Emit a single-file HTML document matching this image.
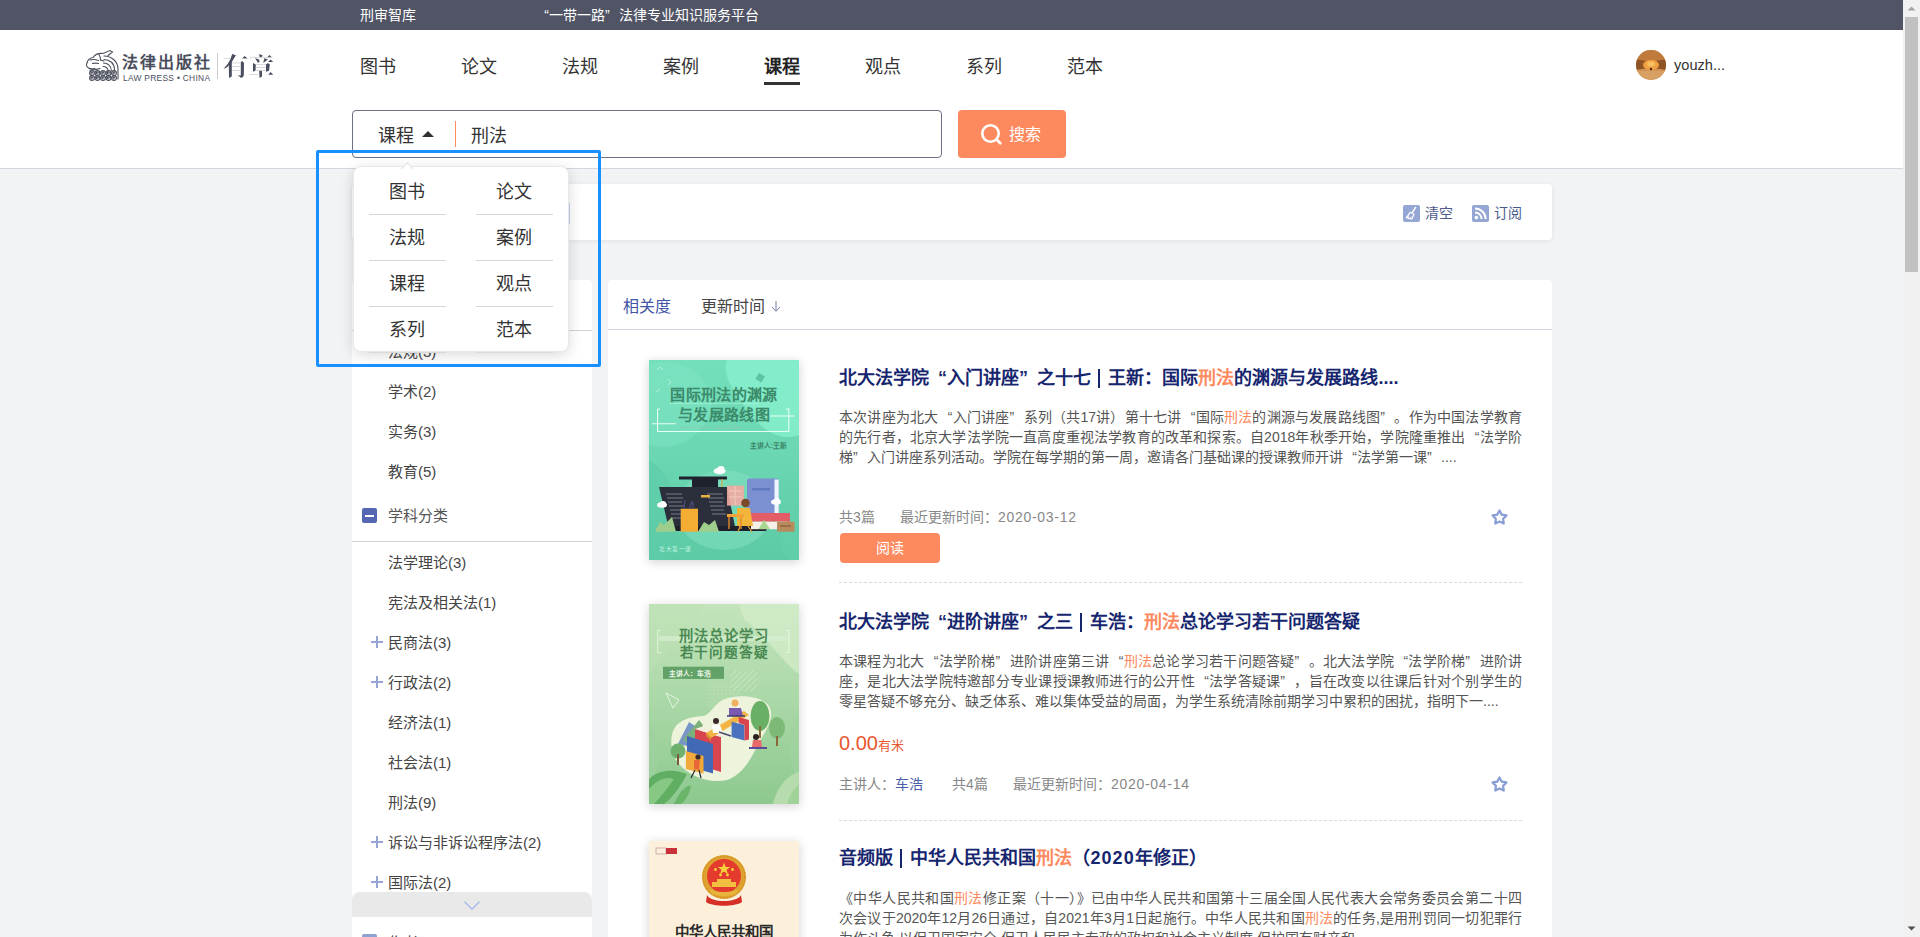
<!DOCTYPE html>
<html lang="zh-CN">
<head>
<meta charset="utf-8">
<title>有章 - 课程搜索</title>
<style>
*{margin:0;padding:0;box-sizing:border-box}
html,body{width:1920px;height:937px;overflow:hidden}
body{font-family:"Liberation Sans",sans-serif;background:#f2f3f5;position:relative;color:#333}
.abs{position:absolute}
.t{position:absolute;white-space:nowrap}
/* top bar */
#topbar{left:0;top:0;width:1903px;height:30px;background:#505465}
#topbar span{position:absolute;top:0;line-height:30px;font-size:14px;color:#fff}
/* header */
#header{left:0;top:30px;width:1903px;height:139px;background:#fff;border-bottom:1px solid #d3d7e0}
.nav{position:absolute;top:54px;font-size:18px;line-height:26px;color:#333;white-space:nowrap}
.nav.on{font-weight:bold;color:#222}
#scroll{left:1903px;top:0;width:17px;height:937px;background:#f1f1f1}
/* search */
#sbox{left:352px;top:110px;width:590px;height:48px;border:1px solid #6c7186;border-radius:4px;background:#fff}
#sbtn{left:958px;top:110px;width:108px;height:48px;border-radius:4px;background:#fd895e}
/* panels */
.panel{position:absolute;background:#fff;border-radius:4px}

.q1{display:inline-block;width:1em;text-align:right;text-align-last:right}
.q2{display:inline-block;width:1em;text-align:left;text-align-last:left}
.hl{color:#fd895e}
.side{position:absolute;left:388px;font-size:15px;line-height:20px;color:#444;white-space:nowrap}
.plus{position:absolute;left:371px;width:12px;height:12px}
.plus:before,.plus:after{content:"";position:absolute;background:#96a5d4}
.plus:before{left:0;top:4.8px;width:12px;height:2.4px}
.plus:after{left:4.8px;top:0;width:2.4px;height:12px}
.minus{position:absolute;left:362px;width:15px;height:15px;border-radius:2px;background:#5566b3}
.minus:after{content:"";position:absolute;left:3px;top:6.5px;width:9px;height:2px;background:#fff}
.title{position:absolute;left:839px;font-size:18px;line-height:26px;font-weight:bold;color:#15256e;white-space:nowrap}
.desc{position:absolute;left:839px;width:683px;font-size:14px;line-height:20px;color:#555;white-space:nowrap}
.desc.j{text-align:justify;text-align-last:justify}
.meta{position:absolute;font-size:14px;line-height:20px;color:#888;white-space:nowrap}
.dash{position:absolute;left:839px;width:683px;height:0;border-top:1px dashed #d9dbe2}
.cover{position:absolute;left:649px;width:150px;height:200px;box-shadow:0 2px 10px rgba(0,0,0,.18);overflow:hidden}
.star{position:absolute;left:1490.5px;width:17px;height:17px;overflow:visible}
.sep{display:inline-block;width:2.4px;height:19px;background:#15256e;margin:0 8px 0 7px;vertical-align:-4px}
.dd{position:absolute;font-size:18px;line-height:26px;color:#333;white-space:nowrap}
.ddl{position:absolute;height:1px;background:#d6d6d6;width:77px}
</style>
</head>
<body>
<div id="topbar" class="abs">
  <span style="left:360px">刑审智库</span>
  <span style="left:535px"><i class="q1" style="font-style:normal">“</i>一带一路<i class="q2" style="font-style:normal">”</i>法律专业知识服务平台</span>
</div>
<div id="header" class="abs"></div>
<!-- logo -->
<svg class="abs" style="left:85px;top:48px" width="35" height="34" viewBox="0 0 35 34">
<g fill="none" stroke="#4a4e5c" stroke-width="1.1" stroke-linecap="round">
<path d="M19 8C26 8 33 13 33 21V31"/>
<path d="M19 11.5C25 11.5 29.5 15.5 29.5 21.5V22.5"/>
<path d="M18.5 15C23 15 26.3 18 26.3 22.5"/>
<path d="M18 18.5C21 18.5 23 20.5 23 22.5"/>
<path d="M2 15C2.5 12 5 10 8 9.5C10 6.5 14 5 18 5.5L25 2.5L27.5 4L23 7.5"/>
<path d="M14 6.5C15 8 15.5 10 15.5 12L19 13"/>
<path d="M5 12C8 11 11 11.5 13.5 12.5M7.5 15.5C9.5 15 11.5 15 13.5 15.5"/>
<path d="M2 15C1 16.5 1.5 19 3.5 20C5 21 8 21 10 20.5"/>
<path d="M5 22C8 22 12 21.5 15 20.5"/>
<circle cx="7" cy="25" r="2.4"/><circle cx="12.5" cy="25" r="2.4"/><circle cx="18" cy="25" r="2.4"/><circle cx="23.5" cy="25" r="2.4"/><circle cx="29" cy="25" r="2.4"/>
<circle cx="7" cy="30" r="2.4"/><circle cx="12.5" cy="30" r="2.4"/><circle cx="18" cy="30" r="2.4"/><circle cx="23.5" cy="30" r="2.4"/><circle cx="29" cy="30" r="2.4"/><path d="M6.8 25.9A1 1 0 1 1 7.9 24.9"/><path d="M12.3 25.9A1 1 0 1 1 13.4 24.9"/><path d="M17.8 25.9A1 1 0 1 1 18.9 24.9"/><path d="M23.3 25.9A1 1 0 1 1 24.4 24.9"/><path d="M28.8 25.9A1 1 0 1 1 29.9 24.9"/><path d="M6.8 30.9A1 1 0 1 1 7.9 29.9"/><path d="M12.3 30.9A1 1 0 1 1 13.4 29.9"/><path d="M17.8 30.9A1 1 0 1 1 18.9 29.9"/><path d="M23.3 30.9A1 1 0 1 1 24.4 29.9"/><path d="M28.8 30.9A1 1 0 1 1 29.9 29.9"/>
</g></svg>
<div class="t" style="left:122px;top:52px;font-size:16px;line-height:22px;font-weight:bold;color:#4a4e5c;letter-spacing:2px">法律出版社</div>
<div class="t" style="left:123px;top:74px;font-size:8.4px;line-height:9px;color:#4a4e5c;letter-spacing:0.3px">LAW PRESS • CHINA</div>
<div class="abs" style="left:217px;top:53px;width:1px;height:26px;background:#c8cad2"></div>
<svg class="abs" style="left:218px;top:48px" width="60" height="36" viewBox="0 0 60 36">
<g fill="#4a4e5e">
<path d="M14.2 6L17.9 7.2L13.5 14.5L9 19.2L5.4 21L10 15.5L12.6 10.8Z"/>
<path d="M10.8 15L13.8 13.8V28.6L11 30Z"/>
<path d="M22.8 14L24.3 13L26 15L25.8 27C25.6 28.5 24.8 29.6 22.6 29.8L21 28L19 27.2L22.8 27.4Z"/>
<path d="M24.2 10.6L26.6 8L29.6 10.6Z"/>
<path d="M41.2 6L44.8 7.4L43.6 9.2L41.6 9.2Z"/>
<path d="M37 10L41 11.6L41.6 13.4L40 15L38.6 12.6Z"/>
<path d="M46.4 10.2L50 11.4L45.2 15Z"/>
<path d="M49 9.6L51.4 7L54 9.6Z"/>
<path d="M50 14L52.6 11.6L55.2 14Z"/>
<path d="M35 15L37.8 16.4L37.6 22.4L35 23.8Z"/>
<path d="M48 16.5L49.8 15L51.8 16.6L51 22.8L48 23.8Z"/>
<path d="M41.2 22.4H44V28.6L41.5 30Z"/>
<path d="M50.2 26.8L52.6 24L55.2 26.8Z"/>
</g>
<g stroke="#cfd1d8" stroke-width=".8">
<path d="M5.5 10.4H12.6M14 14.9H22.5M14 18.5H22.5M14 22.5H22.5"/>
<path d="M31.5 9.4H54M37.6 16.5H48M37.6 19.5H48M37.6 22.5H48M31.2 26.5H40"/>
</g>
</svg>
<div class="nav" style="left:360px">图书</div>
<div class="nav" style="left:461px">论文</div>
<div class="nav" style="left:562px">法规</div>
<div class="nav" style="left:663px">案例</div>
<div class="nav on" style="left:764px">课程</div>
<div class="nav" style="left:865px">观点</div>
<div class="nav" style="left:966px">系列</div>
<div class="nav" style="left:1067px">范本</div>
<div class="abs" style="left:764px;top:82px;width:36px;height:3px;background:#333"></div>
<!-- user -->
<svg class="abs" style="left:1636px;top:50px" width="30" height="30" viewBox="0 0 30 30"><defs><clipPath id="av"><circle cx="15" cy="15" r="15"/></clipPath></defs><g clip-path="url(#av)"><rect width="30" height="30" fill="#d29352"/><rect width="30" height="11" fill="#c07a3c"/><path d="M0 10C6 9 10 12 15 11C20 12 24 9 30 10V20C24 19 20 18 15 18C10 18 6 19 0 20Z" fill="#8e5426"/><ellipse cx="15" cy="15" rx="8" ry="5" fill="#f0a040"/><ellipse cx="15" cy="14" rx="4" ry="2.5" fill="#f7c060"/><circle cx="15" cy="19" r="1.2" fill="#4a2a10"/><rect y="21" width="30" height="9" fill="#d9a066"/></g></svg>
<div class="t" style="left:1674px;top:55px;font-size:14.6px;line-height:20px;color:#333">youzh...</div>

<!-- search -->
<div id="sbox" class="abs"></div>
<div class="t" style="left:378px;top:123px;font-size:18px;line-height:26px;color:#333">课程</div>
<svg class="abs" style="left:422px;top:131px" width="12" height="6" viewBox="0 0 12 6"><path d="M6 0L12 6H0Z" fill="#333"/></svg>
<div class="abs" style="left:455px;top:121px;width:1px;height:26px;background:#fd895e"></div>
<div class="t" style="left:471px;top:123px;font-size:18px;line-height:26px;color:#333">刑法</div>
<div id="sbtn" class="abs"></div>
<svg class="abs" style="left:980px;top:123px" width="24" height="24" viewBox="0 0 24 24"><circle cx="10.5" cy="10.5" r="8.2" fill="none" stroke="#fff" stroke-width="2.6"/><path d="M17.6 17.6L20.3 20.3" stroke="#fff" stroke-width="2.8" stroke-linecap="round"/></svg>
<div class="t" style="left:1009px;top:123px;font-size:16px;line-height:24px;color:#fff">搜索</div>

<!-- top summary panel -->
<div class="panel" style="left:352px;top:184px;width:1200px;height:56px;box-shadow:0 1px 4px rgba(0,0,0,.08)"></div>

<!-- sidebar -->
<div class="panel" style="left:352px;top:280px;width:240px;height:700px"></div>

<!-- main -->
<div class="panel" style="left:608px;top:280px;width:944px;height:700px"></div>


<!-- summary panel content -->
<div class="abs" style="left:520px;top:202px;width:50px;height:23px;border:1px solid #c5d0ee;border-left:none;border-radius:0 2px 2px 0"></div>
<svg class="abs" style="left:1403px;top:205px" width="17" height="17" viewBox="0 0 17 17"><rect width="17" height="17" rx="2" fill="#94a6d4"/><path d="M12.5 2.5L9.6 7.2" stroke="#fff" stroke-width="1.5" stroke-linecap="round"/><path d="M7.2 7.3L11 9.2L9 13.8C7 14 4.6 13.4 3.2 12.6C4.6 11.6 5.8 9.4 7.2 7.3Z" fill="none" stroke="#fff" stroke-width="1.2" stroke-linejoin="round"/><path d="M6 11.2L5.1 13M8 11.8L7.4 13.7" stroke="#fff" stroke-width="1"/></svg>
<div class="t" style="left:1425px;top:203px;font-size:14px;line-height:20px;color:#4c5a8a">清空</div>
<svg class="abs" style="left:1472px;top:205px" width="17" height="17" viewBox="0 0 17 17"><rect width="17" height="17" rx="2" fill="#94a6d4"/><circle cx="4.4" cy="12.6" r="1.8" fill="#fff"/><path d="M3 7.4A6.6 6.6 0 0 1 9.6 14M3 3.4A10.6 10.6 0 0 1 13.6 14" fill="none" stroke="#fff" stroke-width="2"/></svg>
<div class="t" style="left:1494px;top:203px;font-size:14px;line-height:20px;color:#4c5a8a">订阅</div>

<!-- sidebar content -->
<div class="minus" style="top:297px"></div>
<div class="side" style="top:295px">资源类型</div>
<div class="abs" style="left:352px;top:330px;width:240px;height:1px;background:#d3d3d3"></div>
<div class="side" style="top:342px">法规(3)</div>
<div class="side" style="top:382px">学术(2)</div>
<div class="side" style="top:422px">实务(3)</div>
<div class="side" style="top:462px">教育(5)</div>
<div class="minus" style="top:508px"></div>
<div class="side" style="top:506px;left:388px;color:#555">学科分类</div>
<div class="abs" style="left:352px;top:541px;width:240px;height:1px;background:#d3d3d3"></div>
<div class="side" style="top:553px">法学理论(3)</div>
<div class="side" style="top:593px">宪法及相关法(1)</div>
<div class="plus" style="top:636px"></div><div class="side" style="top:633px">民商法(3)</div>
<div class="plus" style="top:676px"></div><div class="side" style="top:673px">行政法(2)</div>
<div class="side" style="top:713px">经济法(1)</div>
<div class="side" style="top:753px">社会法(1)</div>
<div class="side" style="top:793px">刑法(9)</div>
<div class="plus" style="top:836px"></div><div class="side" style="top:833px">诉讼与非诉讼程序法(2)</div>
<div class="plus" style="top:876px"></div><div class="side" style="top:873px">国际法(2)</div>
<div class="abs" style="left:352px;top:892px;width:240px;height:25px;background:#e9e9e9;border-radius:8px 8px 0 0"></div>
<svg class="abs" style="left:464px;top:901px" width="16" height="9" viewBox="0 0 16 9"><path d="M0.5 0.8L8 8L15.5 0.8" fill="none" stroke="#a9b8e8" stroke-width="1.3"/></svg>
<div class="minus" style="top:934px;background:#8fa3d2"></div>
<div class="side" style="top:933px">作者</div>

<!-- main content -->
<div class="t" style="left:623px;top:296px;font-size:16px;line-height:22px;color:#4356a6">相关度</div>
<div class="t" style="left:701px;top:296px;font-size:16px;line-height:22px;color:#444">更新时间</div>
<svg class="abs" style="left:771px;top:301px" width="10" height="11" viewBox="0 0 10 11"><path d="M5 0V10M1 6L5 10.3L9 6" fill="none" stroke="#7a7fa6" stroke-width="1"/></svg>
<div class="abs" style="left:608px;top:329px;width:944px;height:1px;background:#d3d7e0"></div>

<!-- item 1 -->
<div class="cover" style="top:360px" id="c1"><svg width="150" height="200" viewBox="0 0 150 200">
<defs><linearGradient id="g1" x1="0" y1="0" x2="0" y2="1"><stop offset="0" stop-color="#74dfbb"/><stop offset=".5" stop-color="#6ad6b2"/><stop offset="1" stop-color="#5ccaa5"/></linearGradient></defs>
<rect width="150" height="200" fill="url(#g1)"/>
<path d="M78 0H150V75C132 82 112 70 100 52C88 35 72 18 78 0Z" fill="#86efcc" opacity=".85"/>
<path d="M0 5C25 -5 55 10 62 35C68 60 40 95 0 85Z" fill="#7de4c2" opacity=".55"/>
<path d="M0 100C25 115 40 160 18 200H0Z" fill="#5ecca8" opacity=".6"/>
<path d="M150 150C130 165 125 190 140 200H150Z" fill="#62d0ab" opacity=".6"/>
<ellipse cx="75" cy="150" rx="48" ry="40" fill="#86e2c4" opacity=".5"/>
<text x="75" y="39.5" font-size="15" font-weight="bold" fill="#3b8a6a" text-anchor="middle" letter-spacing=".3">国际刑法的渊源</text>
<path d="M20 43.5H110" stroke="#a8f0d6" stroke-width=".7"/>
<text x="75" y="59.5" font-size="15" font-weight="bold" fill="#3b8a6a" text-anchor="middle" letter-spacing=".3">与发展路线图</text>
<path d="M8.6 49H11M8.6 49V71.5H139.8V49H137" fill="none" stroke="#e6fff4" stroke-width="1.1"/>
<path d="M3 63.7H27M121 56H145.5" stroke="#e6fff4" stroke-width="1.1"/>
<text x="32" y="68.5" font-size="3.2" fill="#8fc9b2" letter-spacing="1.4">国际刑法的渊源 与发展路线图</text>
<text x="138" y="88" font-size="6.8" font-weight="bold" fill="#3b8a6a" text-anchor="end">主讲人:王新</text>
<path d="M8 10L11 7L14 10M19 19L22 22L19 25M7 32L11 29" stroke="#b5f3dc" stroke-width=".9" fill="none"/>
<rect x="108" y="14" width="7" height="7" fill="#5fc4a2" transform="rotate(30 111 17)"/>
<ellipse cx="70.6" cy="111" rx="6" ry="3.2" fill="#fff"/><ellipse cx="72" cy="109" rx="3.5" ry="3" fill="#fff"/>
<rect x="30" y="116.5" width="48" height="3" fill="#1f222c"/>
<rect x="43" y="119" width="26" height="8" fill="#1f222c"/>
<path d="M73 119V131" stroke="#e8a640" stroke-width="1"/>
<path d="M10 127H78L86.5 169H20Z" fill="#2b2e3b"/>
<g stroke="#8a8f9c" stroke-width=".8"><path d="M17 134H33M18 138H34M19 142H33M20 146H35M21 150H34M22 154H36M23 158H35"/><path d="M58 134H74M59 138H75M60 142H74M61 146H76M62 150H75M63 154H77"/></g>
<rect x="52" y="135" width="9" height="2.5" fill="#e8b040"/>
<rect x="8.6" y="166" width="109" height="5" rx="1.5" fill="#1e212b"/>
<rect x="31.7" y="148.7" width="17.3" height="23" fill="#f4ac33"/>
<path d="M35 149L36 140M40 149L43 141M44 149L44 142" stroke="#4a5080" stroke-width="1.2"/>
<path d="M5.8 171.7L11 162L15 165L23 157L27 171.7Z" fill="#9fce8c"/>
<path d="M49 171.7L55 162L60 165L66 160L70 171.7Z" fill="#9fce8c"/>
<rect x="78" y="125.6" width="17" height="20" fill="#f3aaa4" opacity=".9"/>
<path d="M80 131H93M80 137H93M86 126V145" stroke="#f8cfc8" stroke-width=".8"/>
<rect x="98" y="118.4" width="31.7" height="36" rx="2" fill="#7b90d0"/>
<rect x="125.5" y="119.5" width="4.2" height="35" fill="#f0f4ff"/>
<rect x="103" y="128" width="18" height="2.5" fill="#6078c0"/>
<rect x="100.9" y="153" width="40" height="8.7" fill="#e35c66"/>
<rect x="102" y="161.7" width="36" height="7.5" fill="#f7f0e8"/>
<rect x="128" y="161.7" width="17.5" height="10" fill="#b98a5c"/>
<rect x="131" y="165" width="11" height="2" fill="#9a6e45"/>
<circle cx="96.5" cy="143" r="4.3" fill="#7a4a2a"/>
<path d="M88 148H101L104 166H88Z" fill="#f3b53a"/>
<path d="M78 154H95V157H78Z" fill="#f2a236"/>
<path d="M80 157V169M92 157V169" stroke="#e08a2a" stroke-width="1.4"/>
<path d="M99 166L103 172M91 166L89 172" stroke="#e39a34" stroke-width="1.3"/>
<ellipse cx="13" cy="145" rx="5" ry="2.8" fill="#fff"/><ellipse cx="14" cy="143.5" rx="3" ry="2.5" fill="#fff"/>
<ellipse cx="127" cy="142" rx="5" ry="2.8" fill="#fff"/><ellipse cx="128" cy="140.5" rx="3" ry="2.5" fill="#fff"/>
<path d="M109.5 169L115 160L121 169Z" fill="#a8d890"/>
<text x="10" y="190.5" font-size="5.6" fill="#c9f5e4" letter-spacing=".5">北大第一课</text>
</svg></div>
<div class="title" style="top:365px">北大法学院<span class="q1">“</span>入门讲座<span class="q2">”</span>之十七<span class="sep"></span>王新：国际<span class="hl">刑法</span>的渊源与发展路线....</div>
<div class="desc j" style="top:407px">本次讲座为北大<span class="q1">“</span>入门讲座<span class="q2">”</span>系列（共17讲）第十七讲<span class="q1">“</span>国际<span class="hl">刑法</span>的渊源与发展路线图<span class="q2">”</span>。作为中国法学教育</div>
<div class="desc j" style="top:427px">的先行者，北京大学法学院一直高度重视法学教育的改革和探索。自2018年秋季开始，学院隆重推出<span class="q1">“</span>法学阶</div>
<div class="desc" style="top:447px">梯<span class="q2">”</span>入门讲座系列活动。学院在每学期的第一周，邀请各门基础课的授课教师开讲<span class="q1">“</span>法学第一课<span class="q2">”</span>....</div>
<div class="meta" style="left:839px;top:507px">共3篇</div>
<div class="meta" style="left:900px;top:507px">最近更新时间：<span style="letter-spacing:.7px">2020-03-12</span></div>
<div class="abs" style="left:840px;top:533px;width:100px;height:30px;border-radius:4px;background:#fd895e"></div>
<div class="t" style="left:876px;top:538px;font-size:14px;line-height:20px;color:#fff">阅读</div>
<svg class="star" style="top:509px" viewBox="0 0 17 17"><path d="M8.50 1.40L10.73 5.63L15.44 6.44L12.11 9.87L12.79 14.61L8.50 12.50L4.21 14.61L4.89 9.87L1.56 6.44L6.27 5.63Z" fill="none" stroke="#8a9ed6" stroke-width="2.2" stroke-linejoin="round"/></svg>
<div class="dash" style="top:582px"></div>

<!-- item 2 -->
<div class="cover" style="top:604px" id="c2"><svg width="150" height="200" viewBox="0 0 150 200">
<defs><linearGradient id="g2" x1="0" y1="0" x2="0" y2="1"><stop offset="0" stop-color="#c4e4bc"/><stop offset=".45" stop-color="#acd9a8"/><stop offset="1" stop-color="#8dc98f"/></linearGradient></defs>
<rect width="150" height="200" fill="url(#g2)"/>
<path d="M90 0H150V70C135 60 120 35 95 15Z" fill="#d4ecca" opacity=".7"/>
<path d="M0 0H55C40 25 20 45 0 70Z" fill="#bde0b5" opacity=".55"/>
<path d="M0 120C15 140 10 170 0 180Z" fill="#9ed09e" opacity=".6"/>
<path d="M150 110C135 130 140 165 150 175Z" fill="#a2d3a0" opacity=".6"/>
<rect x="10" y="32" width="130" height="5" fill="#d6eed0" opacity=".7"/>
<text x="74.5" y="36.5" font-size="14.3" font-weight="bold" fill="#4a8a52" text-anchor="middle" letter-spacing="1">刑法总论学习</text>
<text x="75" y="53" font-size="13.6" font-weight="bold" fill="#4a8a52" text-anchor="middle" letter-spacing=".8">若干问题答疑</text>
<path d="M12 26.3H8.7V48.6H12M136.7 26.3H140V48.6H136.7" fill="none" stroke="#e8f6e2" stroke-width=".9"/>
<rect x="14" y="62.7" width="61" height="12.2" fill="#62a268"/>
<text x="20" y="71.6" font-size="6.8" font-weight="bold" fill="#eaf7e6">主讲人：车浩</text>
<g stroke="#e0f1da" stroke-width=".7" opacity=".9"><path d="M81.5 72L87 66.7M81.5 78L92.8 66.7M81.5 84L98.8 66.7M83.7 87.3L104.3 66.7M89.7 87.3L108.5 68.5M95.7 87.3L108.5 74.5M101.7 87.3L108.5 80.5"/></g>
<g stroke="#c4e2bc" stroke-width=".5" opacity=".8"><path d="M57 82H94M57 86H94M57 90H94M57 94H94M57 98H94M57 102H94M61 78V106M65 78V106M69 78V106M73 78V106M77 78V106M81 78V106M85 78V106M89 78V106"/></g>
<path d="M17 89L30 96L24 104Z" fill="none" stroke="#f2faf0" stroke-width=".8"/>
<path d="M76 95C90 90 112 92 120 102C126 112 118 125 112 135C104 150 96 170 78 176C60 180 40 172 30 160C22 150 20 135 25 125C30 115 45 112 55 112C62 110 66 98 76 95Z" fill="#eef3dc"/>
<path d="M29 140L40 118L46 122L38 142Z" fill="#5a7ec0" opacity=".8"/>
<path d="M34 136L50 116L54 121L42 140Z" fill="#7ab07a"/>
<circle cx="29" cy="147" r="7.5" fill="#6fb06e"/><rect x="28" y="150" width="2" height="11" fill="#7a5a3a"/>
<path d="M46 125L72 133V168L46 160Z" fill="#d8454f"/>
<path d="M46 125L52 123L78 131L72 133Z" fill="#f6efe0"/>
<path d="M38 132L64 140V169.5L38 162Z" fill="#4169b5"/>
<path d="M36.9 147L54.5 152V169.5L36.9 165Z" fill="#f2a93b"/>
<path d="M57 129L95 107L100 111L62 134Z" fill="#f2b545"/>
<path d="M57 129L62 134V137L57 132Z" fill="#d9902c"/>
<path d="M82.6 117.8L95.5 121V136.6L82.6 133Z" fill="#4a72be"/>
<path d="M89.7 113L100 116V135.5L95.5 136.6V121L89.7 119Z" fill="#d8454f"/>
<ellipse cx="111" cy="112" rx="9.5" ry="15" fill="#6aaf66"/><rect x="110" y="122" width="2" height="12" fill="#8a6a3a"/>
<ellipse cx="128" cy="124" rx="8" ry="11" fill="#7dba78"/><rect x="127" y="132" width="2" height="10" fill="#8a6a3a"/>
<circle cx="86" cy="99" r="3.5" fill="#f0b060"/><path d="M80 104H92L94 112H80Z" fill="#7a5ab0"/><path d="M78 112H96" stroke="#3a3a70" stroke-width="1.5"/>
<circle cx="67" cy="117" r="3" fill="#3a2a2a"/><path d="M63 121H71L74 129H64Z" fill="#fff"/><path d="M70 128L82 132" stroke="#4a4a6a" stroke-width="1.6"/>
<circle cx="107" cy="133" r="3" fill="#2a2020"/><path d="M104 136H112L113 143H103Z" fill="#e86a6a"/><path d="M100 144H118" stroke="#5a4a9a" stroke-width="2"/>
<circle cx="49" cy="153" r="2.6" fill="#3a2a2a"/><path d="M45 156L51 156L50 166L45 165Z" fill="#e8683a"/><path d="M46 166L42 174M50 166L52 174" stroke="#2a2a3a" stroke-width="1.2"/>
<path d="M0 200V175C10 165 25 165 38 170C32 182 22 195 15 200Z" fill="#5fae62"/>
<path d="M0 185C8 175 18 172 25 175C18 185 10 195 5 200H0Z" fill="#8ccb88" opacity=".9"/>
<path d="M25 200C30 188 38 180 42 182C40 192 35 198 32 200Z" fill="#6ab56a"/>
<path d="M150 200V168C140 170 128 182 124 200Z" fill="#b6dcae"/>
<path d="M150 200V180C145 185 140 192 138 200Z" fill="#a0d29a"/>
</svg></div>
<div class="title" style="top:609px">北大法学院<span class="q1">“</span>进阶讲座<span class="q2">”</span>之三<span class="sep"></span>车浩：<span class="hl">刑法</span>总论学习若干问题答疑</div>
<div class="desc j" style="top:651px">本课程为北大<span class="q1">“</span>法学阶梯<span class="q2">”</span>进阶讲座第三讲<span class="q1">“</span><span class="hl">刑法</span>总论学习若干问题答疑<span class="q2">”</span>。北大法学院<span class="q1">“</span>法学阶梯<span class="q2">”</span>进阶讲</div>
<div class="desc j" style="top:671px">座，是北大法学院特邀部分专业课授课教师进行的公开性<span class="q1">“</span>法学答疑课<span class="q2">”</span>，旨在改变以往课后针对个别学生的</div>
<div class="desc" style="top:691px">零星答疑不够充分、缺乏体系、难以集体受益的局面，为学生系统清除前期学习中累积的困扰，指明下一....</div>
<div class="t" style="left:839px;top:730px;font-size:20px;line-height:26px;color:#e8572f">0.00<span style="font-size:13px">有米</span></div>
<div class="meta" style="left:839px;top:774px">主讲人：<span style="color:#4a5ea8">车浩</span></div>
<div class="meta" style="left:952px;top:774px">共4篇</div>
<div class="meta" style="left:1013px;top:774px">最近更新时间：<span style="letter-spacing:.7px">2020-04-14</span></div>
<svg class="star" style="top:776px" viewBox="0 0 17 17"><path d="M8.50 1.40L10.73 5.63L15.44 6.44L12.11 9.87L12.79 14.61L8.50 12.50L4.21 14.61L4.89 9.87L1.56 6.44L6.27 5.63Z" fill="none" stroke="#8a9ed6" stroke-width="2.2" stroke-linejoin="round"/></svg>
<div class="dash" style="top:820px"></div>

<!-- item 3 -->
<div class="cover" style="top:841px" id="c3"><svg width="150" height="200" viewBox="0 0 150 200">
<rect width="150" height="200" fill="#fcf0da"/>
<rect x="7" y="7" width="10" height="6" fill="none" stroke="#c8a0a0" stroke-width=".8"/>
<rect x="17" y="7" width="11" height="6" fill="#c8303a"/>
<path d="M58 54C62 62 88 62 92 54L93 61C86 66 64 66 57 61Z" fill="#d52f28"/>
<circle cx="75" cy="36" r="22" fill="#e0a22e"/>
<circle cx="75" cy="36" r="21" fill="none" stroke="#c98a20" stroke-width="1" stroke-dasharray="2 1.5"/>
<circle cx="75" cy="35" r="17" fill="#e53a2e"/>
<path d="M75 21.5L76.6 26H81.3L77.5 28.7L78.9 33.2L75 30.4L71.1 33.2L72.5 28.7L68.7 26H73.4Z" fill="#f7d23a"/>
<circle cx="66.5" cy="28.5" r="1.4" fill="#f7d23a"/><circle cx="83.5" cy="28.5" r="1.4" fill="#f7d23a"/><circle cx="71.5" cy="34" r="1.4" fill="#f7d23a"/><circle cx="78.5" cy="34" r="1.4" fill="#f7d23a"/>
<rect x="68" y="38" width="14" height="3" fill="#f2c040"/>
<rect x="63" y="41" width="24" height="5" fill="#f2c040"/>
<path d="M61 48C66 52 84 52 89 48L88 52C82 56 68 56 62 52Z" fill="#e8b43a"/>
<text x="75" y="96" font-size="14.5" font-weight="600" font-family="Liberation Serif,serif" fill="#2a2a2a" text-anchor="middle">中华人民共和国</text>
</svg></div>
<div class="title" style="top:845px">音频版<span class="sep"></span>中华人民共和国<span class="hl">刑法</span>（<span style="letter-spacing:1.1px">2020</span>年修正）</div>
<div class="desc j" style="top:888px">《中华人民共和国<span class="hl">刑法</span>修正案（十一）》已由中华人民共和国第十三届全国人民代表大会常务委员会第二十四</div>
<div class="desc j" style="top:908px">次会议于2020年12月26日通过，自2021年3月1日起施行。中华人民共和国<span class="hl">刑法</span>的任务,是用刑罚同一切犯罪行</div>
<div class="desc" style="top:928px">为作斗争,以保卫国家安全,保卫人民民主专政的政权和社会主义制度,保护国有财产和...</div>

<!-- dropdown -->
<div class="abs" style="left:353px;top:166px;width:216px;height:186px;background:#fff;border:1px solid #e8e8e8;border-radius:8px;box-shadow:0 3px 14px rgba(0,0,0,.15)"></div>
<div class="ddl" style="left:369px;top:352px;background:#d9d9d9"></div><div class="ddl" style="left:476px;top:352px;background:#d9d9d9"></div>
<div class="abs" style="left:403px;top:163.8px;width:8.5px;height:8.5px;background:#fff;border-top:1px solid #e2e2e2;border-left:1px solid #e2e2e2;transform:rotate(45deg)"></div>
<div class="dd" style="left:389px;top:179px">图书</div>
<div class="dd" style="left:496px;top:179px">论文</div>
<div class="ddl" style="left:369px;top:214px"></div><div class="ddl" style="left:476px;top:214px"></div>
<div class="dd" style="left:389px;top:225px">法规</div>
<div class="dd" style="left:496px;top:225px">案例</div>
<div class="ddl" style="left:369px;top:260px"></div><div class="ddl" style="left:476px;top:260px"></div>
<div class="dd" style="left:389px;top:271px">课程</div>
<div class="dd" style="left:496px;top:271px">观点</div>
<div class="ddl" style="left:369px;top:306px"></div><div class="ddl" style="left:476px;top:306px"></div>
<div class="dd" style="left:389px;top:317px">系列</div>
<div class="dd" style="left:496px;top:317px">范本</div>

<!-- highlight box -->
<div class="abs" style="left:316px;top:150px;width:285px;height:217px;border:3px solid #1890ff;border-radius:2px"></div>

<div id="scroll" class="abs"></div>
<div class="abs" style="left:1905px;top:17px;width:13px;height:255px;background:#c1c1c1"></div>
<svg class="abs" style="left:1903px;top:0" width="17" height="17" viewBox="0 0 17 17"><path d="M4.5 10.5L8.5 6.5L12.5 10.5Z" fill="#a3a3a3"/></svg>
<svg class="abs" style="left:1903px;top:920px" width="17" height="17" viewBox="0 0 17 17"><path d="M4.5 6.5L8.5 10.5L12.5 6.5Z" fill="#505050"/></svg>
</body>
</html>
